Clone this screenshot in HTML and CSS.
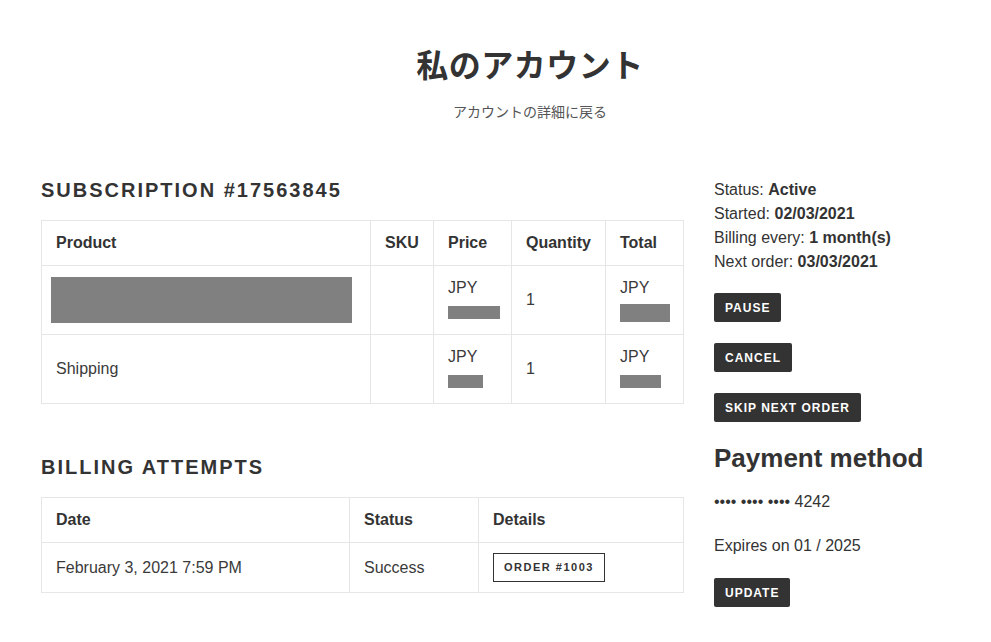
FILE: index.html
```html
<!DOCTYPE html>
<html lang="ja">
<head>
  <meta charset="UTF-8">
  <meta name="viewport" content="width=device-width, initial-scale=1.0">
  <title>私のアカウント</title>
  <link rel="stylesheet" href="styles.css">
</head>
<body>

  <header class="page-header">
    <h1>私のアカウント</h1>
    <a class="back-link" href="#">アカウントの詳細に戻る</a>
  </header>

  <div class="account">
    <div class="main-col">
      <h2 class="section-title">Subscription #17563845</h2>
      <table class="data-table sub-table">
        <thead>
          <tr>
            <th class="col-product">Product</th>
            <th class="col-sku">SKU</th>
            <th class="col-price">Price</th>
            <th class="col-qty">Quantity</th>
            <th class="col-total">Total</th>
          </tr>
        </thead>
        <tbody>
          <tr>
            <td class="product-cell"><div class="redact redact-product"></div></td>
            <td></td>
            <td>JPY<br><span class="redact redact-line" style="width:52px"></span></td>
            <td>1</td>
            <td>JPY<br><span class="redact redact-line tall" style="width:50px"></span></td>
          </tr>
          <tr>
            <td>Shipping</td>
            <td></td>
            <td>JPY<br><span class="redact redact-line" style="width:35px"></span></td>
            <td>1</td>
            <td>JPY<br><span class="redact redact-line" style="width:41px"></span></td>
          </tr>
        </tbody>
      </table>

      <h2 class="section-title billing-title">Billing attempts</h2>
      <table class="data-table billing-table">
        <thead>
          <tr>
            <th class="col-date">Date</th>
            <th class="col-status">Status</th>
            <th>Details</th>
          </tr>
        </thead>
        <tbody>
          <tr>
            <td>February 3, 2021 7:59 PM</td>
            <td>Success</td>
            <td><a class="btn-outline" href="#">Order #1003</a></td>
          </tr>
        </tbody>
      </table>
    </div>

    <aside class="side-col">
      <ul class="sub-info">
        <li>Status: <b>Active</b></li>
        <li>Started: <b>02/03/2021</b></li>
        <li>Billing every: <b>1 month(s)</b></li>
        <li>Next order: <b>03/03/2021</b></li>
      </ul>

      <div class="actions">
        <button class="btn">Pause</button>
        <button class="btn">Cancel</button>
        <button class="btn">Skip next order</button>
      </div>

      <h3 class="payment-title">Payment method</h3>
      <p class="card-line">&bull;&bull;&bull;&bull; &bull;&bull;&bull;&bull; &bull;&bull;&bull;&bull; 4242</p>
      <p class="card-line expires">Expires on 01 / 2025</p>
      <button class="btn update-btn">Update</button>
    </aside>
  </div>

</body>
</html>
```

FILE: styles.css
```css
body {
  font-family: 'Liberation Sans', Arial, 'Noto Sans CJK JP', sans-serif;
  font-size: 16px;
  line-height: 24px;
  background: #fff;
  color: #3a3a3a;
  margin: 0;
  padding: 0;
}
.page-header {
  padding: 43px 0 0 69px;
  text-align: center;
}
.page-header h1 {
  font-family: 'Noto Sans CJK JP', sans-serif;
  font-size: 32px;
  line-height: 40px;
  letter-spacing: 0.5px;
  font-weight: bold;
  color: #333;
  margin: 0;
}
.back-link {
  display: block;
  margin-top: 18px;
  font-family: 'Noto Sans CJK JP', sans-serif;
  font-size: 14px;
  line-height: 20px;
  color: #555;
  text-decoration: none;
}
.account {
  display: grid;
  grid-template-columns: 643px 236px;
  gap: 30px;
  align-items: start;
  padding-left: 41px;
  margin-top: 57px;
}
.section-title {
  font-size: 20px;
  line-height: 24px;
  letter-spacing: 2px;
  text-transform: uppercase;
  font-weight: bold;
  color: #333;
  margin: 0 0 18px;
}
.billing-title {
  margin-top: 51px;
  margin-bottom: 18px;
}
.data-table {
  width: 643px;
  border-collapse: collapse;
  table-layout: fixed;
}
.data-table th, .data-table td {
  box-sizing: border-box;
  border: 1px solid #e6e6e6;
  padding: 10px 14px;
  text-align: left;
  vertical-align: middle;
}
.data-table th {
  font-weight: bold;
  color: #333;
}
.col-product { width: 329px; }
.col-sku { width: 63px; }
.col-price { width: 78px; }
.col-qty { width: 94px; }
.col-date { width: 308px; }
.col-status { width: 129px; }
.product-cell {
  padding-left: 9px !important;
}
.redact {
  background: #808080;
}
.redact-product {
  width: 301px;
  height: 46px;
}
.redact-line {
  display: inline-block;
  height: 13px;
  vertical-align: middle;
}
.redact-line.tall {
  height: 18px;
}
.btn-outline {
  display: inline-block;
  border: 1px solid #333;
  padding: 0 10px;
  height: 27px;
  line-height: 27px;
  font-size: 11px;
  font-weight: bold;
  letter-spacing: 1.5px;
  text-transform: uppercase;
  color: #333;
  text-decoration: none;
}
.sub-info {
  list-style: none;
  margin: 0;
  padding: 0;
  color: #333;
}
.actions {
  display: flex;
  flex-direction: column;
  align-items: flex-start;
  gap: 21px;
  margin-top: 19px;
}
.btn {
  font-family: 'Liberation Sans', Arial, sans-serif;
  background: #333;
  color: #fff;
  border: none;
  border-radius: 2px;
  height: 29px;
  padding: 0 11px;
  font-size: 12px;
  font-weight: bold;
  letter-spacing: 1px;
  text-transform: uppercase;
  cursor: pointer;
}
.payment-title {
  font-size: 26px;
  line-height: 32px;
  font-weight: bold;
  color: #333;
  margin: 20px 0 16px;
}
.card-line {
  margin: 0;
  color: #333;
}
.card-line.expires {
  margin-top: 20px;
}
.update-btn {
  margin-top: 20px;
}
```
